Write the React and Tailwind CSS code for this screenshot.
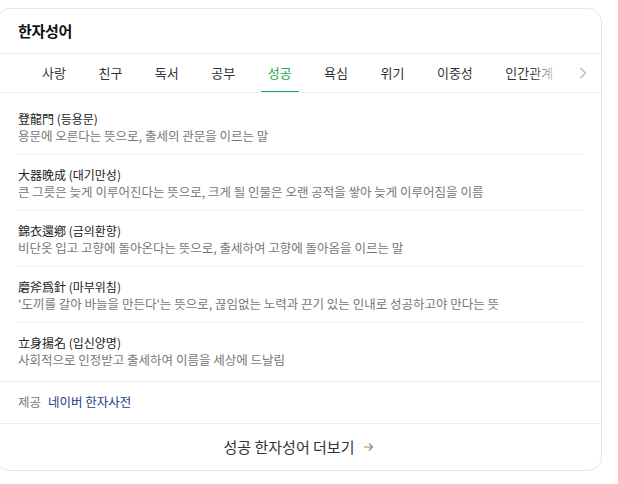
import React from "react";

const tabs = ["사랑", "친구", "독서", "공부", "성공", "욕심", "위기", "이중성", "인간관계"];
const items = [
  ["登龍門 (등용문)", "용문에 오른다는 뜻으로, 출세의 관문을 이르는 말"],
  ["大器晩成 (대기만성)", "큰 그릇은 늦게 이루어진다는 뜻으로, 크게 될 인물은 오랜 공적을 쌓아 늦게 이루어짐을 이름"],
  ["錦衣還鄕 (금의환향)", "비단옷 입고 고향에 돌아온다는 뜻으로, 출세하여 고향에 돌아옴을 이르는 말"],
  ["磨斧爲針 (마부위침)", "'도끼를 갈아 바늘을 만든다'는 뜻으로, 끊임없는 노력과 끈기 있는 인내로 성공하고야 만다는 뜻"],
  ["立身揚名 (입신양명)", "사회적으로 인정받고 출세하여 이름을 세상에 드날림"],
];

export default function App() {
  return (
    <div
      className="w-[618px] h-[484px] bg-white overflow-hidden"
      style={{ fontFamily: '"Noto Sans CJK KR", "Noto Sans", sans-serif' }}
    >
      <div className="mt-[8px] ml-[-4px] w-[606px] h-[463px] border border-[#e6e6e6] rounded-[14px] flex flex-col overflow-hidden">
        <div className="h-[45px] flex items-center pl-[21px] pt-[1px] border-b border-[#ececec] shrink-0">
          <span className="text-[15px] font-bold text-[#111] tracking-[-0.3px]">한자성어</span>
        </div>
        <div className="relative h-[39px] border-b border-[#ececec] shrink-0 overflow-hidden">
          <div className="flex h-full pl-[38px] gap-[18.5px] whitespace-nowrap">
            {tabs.map((t, i) => (
              <div
                key={t}
                className={
                  "relative h-full flex items-center px-[7px] text-[13px] " +
                  (i === 4 ? "text-[#1fa756]" : "text-[#333]")
                }
              >
                {t}
                {i === 4 && (
                  <div className="absolute left-0 right-0 bottom-[-1px] h-[2px] bg-[#1fa756]" />
                )}
              </div>
            ))}
          </div>
          <div className="absolute top-0 right-0 h-full w-[72px] flex items-center justify-end pr-[14px] bg-gradient-to-r from-white/0 via-white via-[45%] to-white">
            <svg width="8" height="12" viewBox="0 0 8 12" fill="none">
              <path d="M1.5 1 L6.5 6 L1.5 11" stroke="#b5b5b5" strokeWidth="1.2" />
            </svg>
          </div>
        </div>
        <div className="pl-[21px] pr-[17px] pt-[6px] pb-[3px] shrink-0">
          {items.map(([h, d], i) => (
            <div
              key={h}
              className={"py-[10.5px] " + (i < items.length - 1 ? "border-b border-[#f0f0f0]" : "")}
            >
              <div className="text-[12px] leading-[17px] text-[#222]">{h}</div>
              <div className="text-[12.5px] leading-[17px] text-[#777]">{d}</div>
            </div>
          ))}
        </div>
        <div className="h-[42px] flex items-center pl-[21px] border-t border-[#ececec] shrink-0 text-[12.5px]">
          <span className="text-[#777]">제공</span>
          <span className="ml-[7px] text-[#223c8a]">네이버 한자사전</span>
        </div>
        <div className="flex-1 flex items-center justify-center border-t border-[#ececec] text-[15px] text-[#333]">
          <span>성공 한자성어 더보기</span>
          <svg className="ml-[9px]" width="11" height="10" viewBox="0 0 11 10" fill="none">
            <path d="M1 5 H9.5 M6 1.5 L9.5 5 L6 8.5" stroke="#888" strokeWidth="1.2" />
          </svg>
        </div>
      </div>
    </div>
  );
}
